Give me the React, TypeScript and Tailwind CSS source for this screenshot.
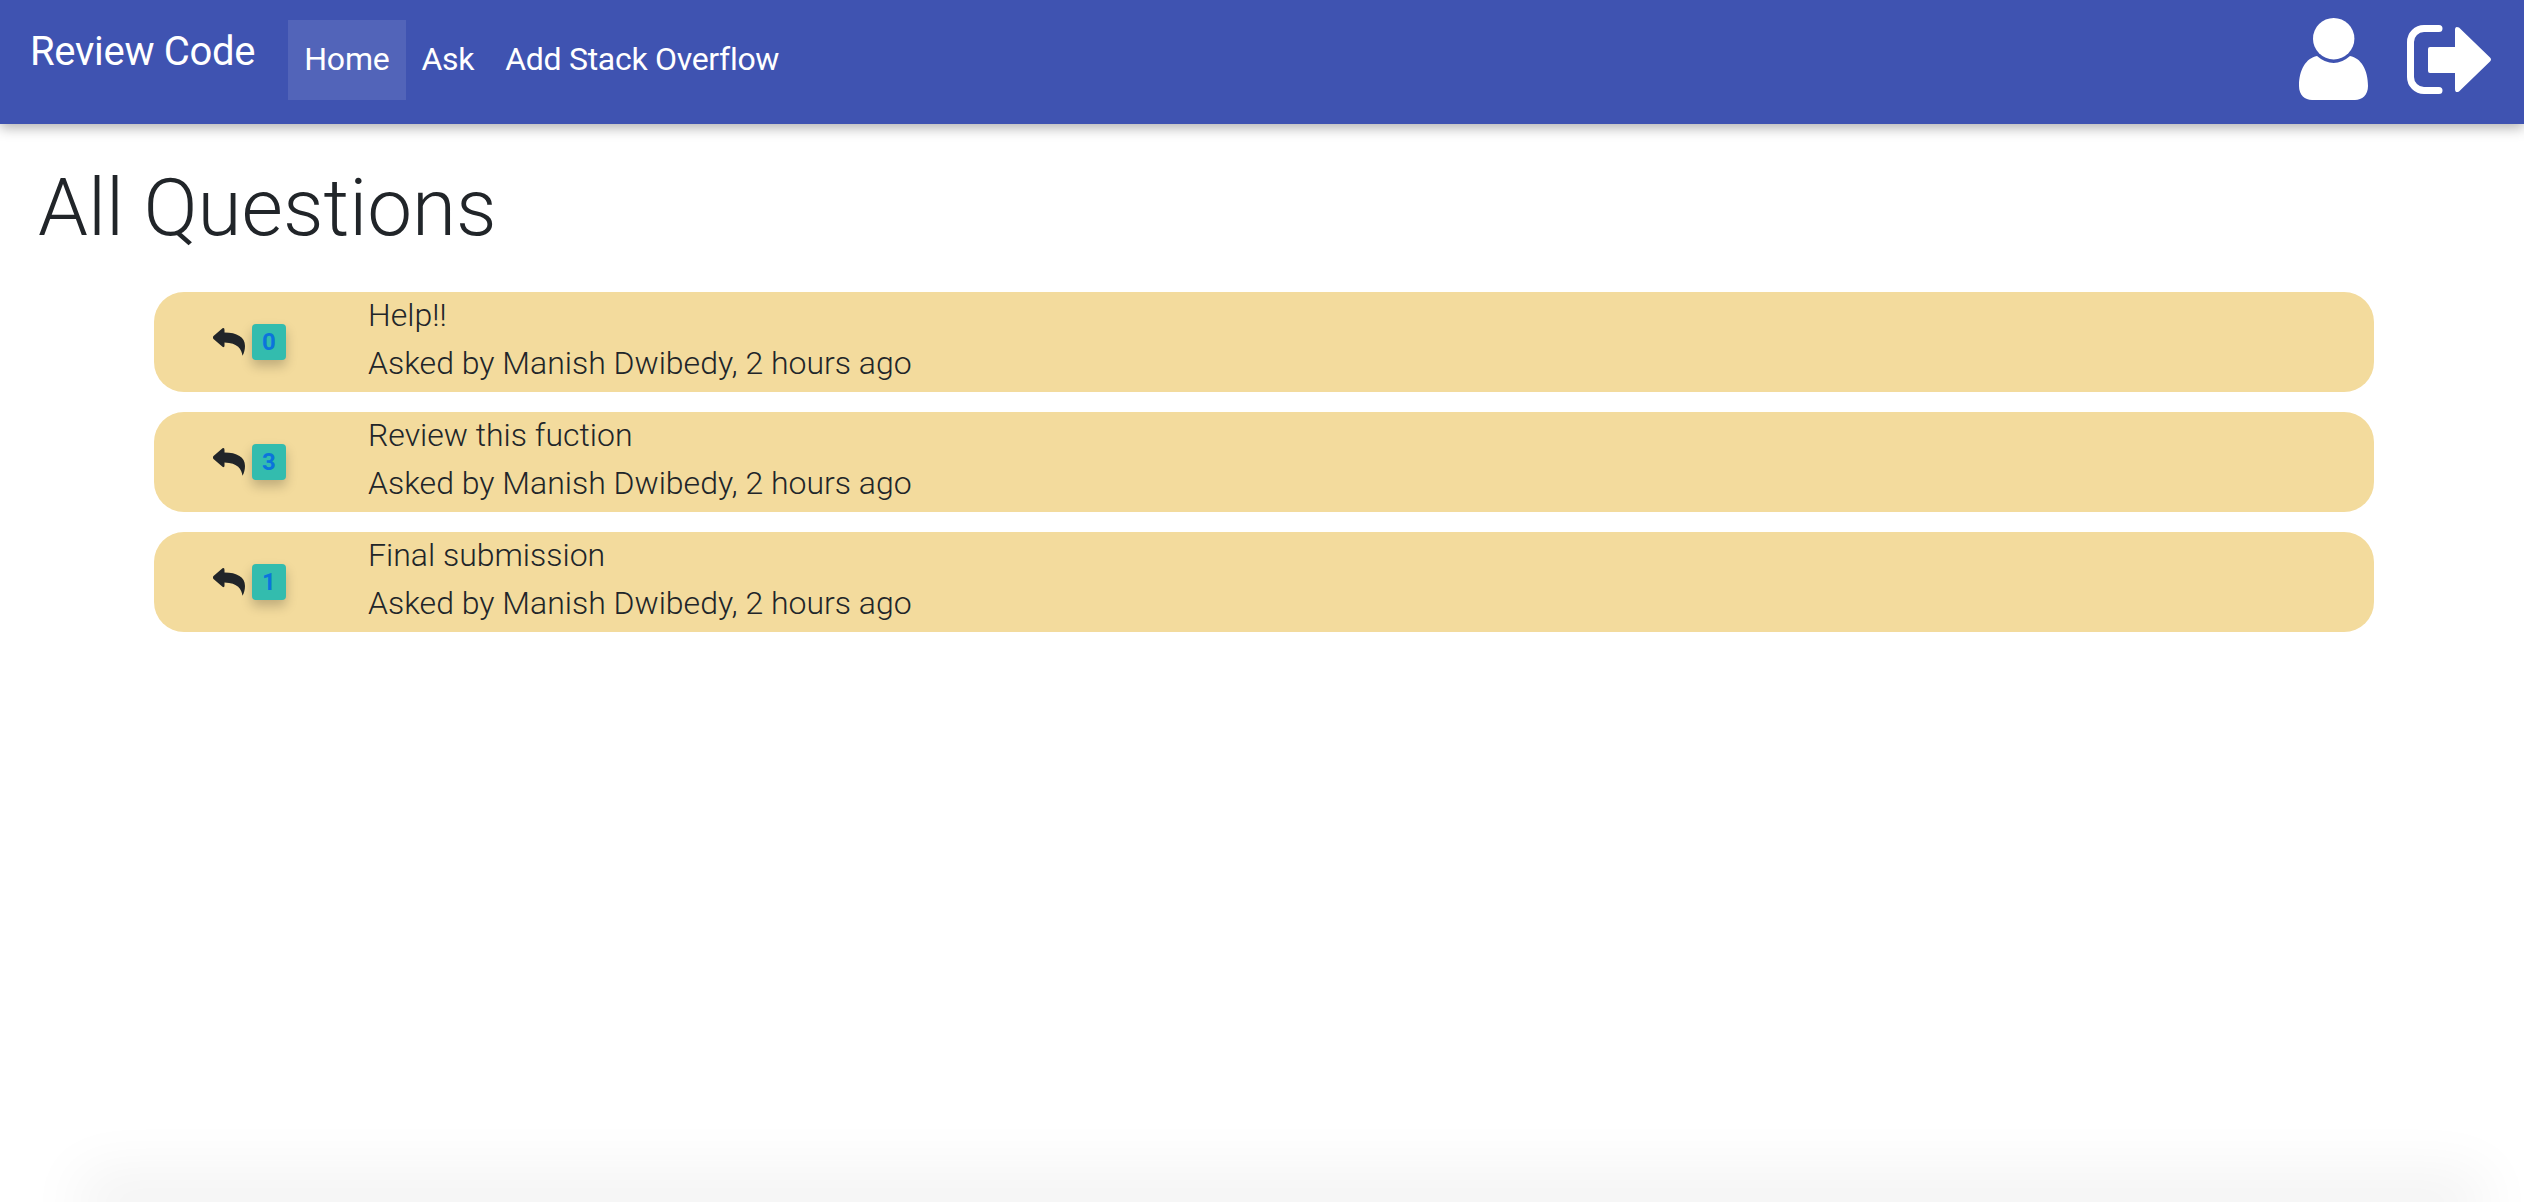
const questions = [
  { id: 1, title: "Help!!", answers: 0 },
  { id: 2, title: "Review this fuction", answers: 3 },
  { id: 3, title: "Final submission", answers: 1 },
];

function UserIcon() {
  return (
    <svg viewBox="0 0 69 82" className="h-[82px] w-[69px] fill-white">
      <circle cx="34.7" cy="20.7" r="20.7" />
      <path d="M18 38 Q26 45 34.7 45 Q43 45 51 38 C62 40 69 52 69 68 C69 77 63 82 56 82 H13 C6 82 0 77 0 68 C0 52 7 40 18 38Z" />
    </svg>
  );
}

function SignOutIcon() {
  return (
    <svg viewBox="0 0 84 69" className="h-[69px] w-[84px] fill-white">
      <path
        d="M32 3.5 H17 A13.5 13.5 0 0 0 3.5 17 V52 A13.5 13.5 0 0 0 17 65.5 H32"
        fill="none"
        stroke="white"
        strokeWidth="7"
        strokeLinecap="round"
      />
      <path d="M23 22 H48 V5 Q48 0.5 52 2.5 L83 32.5 Q85 34.5 83 36.5 L52 66.5 Q48 68.5 48 64 V48 H23 Q21 48 21 46 V24 Q21 22 23 22Z" />
    </svg>
  );
}

function ReplyIcon() {
  return (
    <svg viewBox="0 0 32 28" className="h-[28px] w-[32px] fill-[#212529]">
      <path d="M0.5 8 L9.5 0.3 Q11.5 -0.7 11.5 2 V4.5 C24 4.5 32 9 32 18 C32 22 31 25 29.5 27.8 C28.5 21 25 15 11.5 14.5 V17.5 Q11.5 20 9.5 18.8 L0.5 11 Q-0.7 9.5 0.5 8Z" />
    </svg>
  );
}

export default function App() {
  return (
    <div className="flex h-screen flex-col overflow-hidden bg-white font-['Roboto',sans-serif] text-[32px] font-light leading-[48px] text-[#212529]">
      <nav className="flex h-[124px] shrink-0 items-start bg-[#3f53b1] pl-[30px] pr-[33px] text-white shadow-[0_4px_12px_rgba(0,0,0,0.3)]">
        <a className="mr-[33px] mt-[22px] text-[40px] font-normal leading-[60px] tracking-[-0.3px]">Review Code</a>
        <a className="mt-[20px] bg-white/10 pb-[17px] pl-[16px] pr-[16px] pt-[15px] font-normal tracking-[-0.2px]">Home</a>
        <a className="mt-[20px] pb-[17px] pl-[16px] pr-[15px] pt-[15px] font-normal tracking-[-0.3px]">Ask</a>
        <a className="mt-[20px] px-[16px] pb-[17px] pt-[15px] font-normal tracking-[-0.3px]">Add Stack Overflow</a>
        <div className="ml-auto mt-[18px] flex items-start gap-[39px]">
          <UserIcon />
          <div className="mt-[7px]">
            <SignOutIcon />
          </div>
        </div>
      </nav>

      <h1 className="ml-[38px] mt-[36px] text-[80px] font-light leading-[96px]">All Questions</h1>

      <div className="ml-[154px] mr-[150px] mt-[36px] flex flex-col gap-[20px]">
        {questions.map((q) => (
          <div key={q.id} className="flex h-[100px] items-center rounded-[30px] bg-[#f3db9d] pl-[59px]">
            <div className="flex w-[155px] items-center">
              <ReplyIcon />
              <span className="ml-[7px] flex h-[36px] w-[34px] items-center justify-center rounded-[4px] bg-[#33bcae] text-[24px] font-bold leading-none text-[#0b74dc] shadow-[0_6px_12px_rgba(0,0,0,0.22)]">
                {q.answers}
              </span>
            </div>
            <div className="mt-[-6px]">
              <div>{q.title}</div>
              <div>Asked by Manish Dwibedy, 2 hours ago</div>
            </div>
          </div>
        ))}
      </div>

      {/* footer sits right at the bottom edge, only its shadow shows */}
      <div className="ml-[110px] mr-[70px] mt-auto h-0 shrink-0 shadow-[0_0_60px_30px_rgba(0,0,0,0.055)]" />
    </div>
  );
}
